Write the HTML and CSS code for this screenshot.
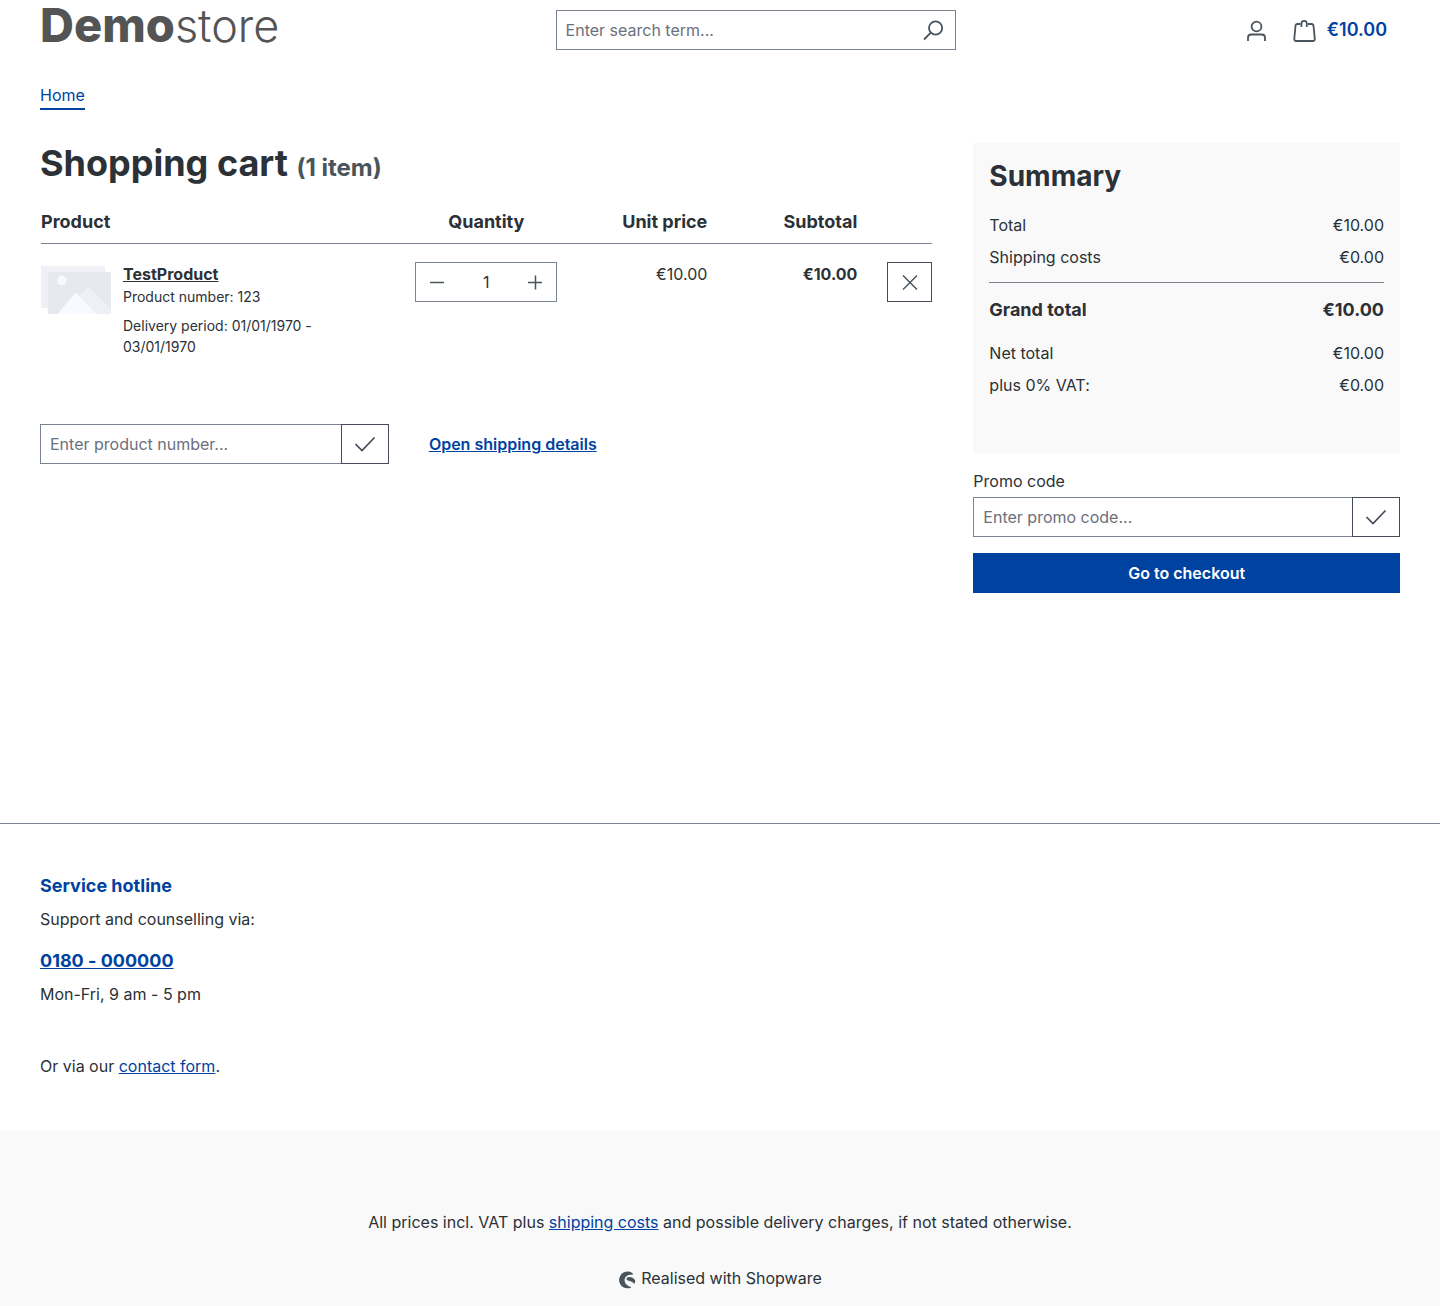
FILE: index.html
```html
<!DOCTYPE html>
<html lang="en">
<head>
<meta charset="utf-8">
<meta name="viewport" content="width=device-width, initial-scale=1">
<title>Shopping cart</title>
<link rel="stylesheet" href="styles.css">
</head>
<body>
<header class="header container">
  <a class="logo" href="#"><strong>Demo</strong><span>store</span></a>
  <form class="search" role="search">
    <input type="search" placeholder="Enter search term..." aria-label="Enter search term">
    <button type="button" aria-label="Search">
      <svg class="icon" viewBox="0 0 22 22"><circle cx="13.600" cy="9" r="6.600"/><path d="M8.800 13.700 2 20.500"/></svg>
    </button>
  </form>
  <div class="actions">
    <button class="action" type="button" aria-label="Your account">
      <svg class="icon" viewBox="0 0 22 22"><circle cx="11.500" cy="7.500" r="4.900"/><path d="M3 22v-3.200q0-3.300 3.300-3.300h10.400q3.300 0 3.300 3.300V22"/></svg>
    </button>
    <a class="action cart-link" href="#" aria-label="Shopping cart, €10.00">
      <svg class="icon" viewBox="0 0 22 22"><path d="M7.200 5H4.500Q2.700 5 2.500 6.800L1.300 19.500Q1.200 22 3.200 22h16.600q2.100 0 2-2.500L20.500 6.800Q20.300 5 18.500 5H15M8.400 8V4.500q0-2.700 2.700-2.700t2.700 2.700V8"/></svg>
      <span>€10.00</span>
    </a>
  </div>
</header>

<nav class="main-nav container" aria-label="Main"><a href="#">Home</a></nav>

<main class="checkout container">
  <section class="cart">
    <h1>Shopping cart <small>(1 item)</small></h1>
    <table class="items">
      <thead>
        <tr><th class="col-product">Product</th><th class="col-quantity">Quantity</th><th class="col-price">Unit price</th><th class="col-price">Subtotal</th><th class="col-remove"></th></tr>
      </thead>
      <tbody>
        <tr>
          <td>
            <div class="product">
              <svg class="thumb" viewBox="0 0 70 48" aria-hidden="true">
                <path fill="#f0f1f6" d="M0 0h64v42H0z"/><path fill="#fff" d="M5.500 42h1.500v6h-1.500z"/><path fill="#e8e9ee" d="M6.800 6H70v42H6.800z"/>
                <circle cx="20.800" cy="14.500" r="4.700" fill="#f9faff"/>
                <path fill="#eff0f6" d="M34 34l13.500-13.500L70 43.500V48H50z"/><path fill="#f9faff" d="M16.500 48 34.700 26.300 55 48z"/>
              </svg>
              <div class="details">
                <a class="name" href="#">TestProduct</a>
                <p>Product number: 123</p>
                <p class="delivery">Delivery period: 01/01/1970 - 03/01/1970</p>
              </div>
            </div>
          </td>
          <td>
            <div class="quantity">
              <button type="button" aria-label="Decrease quantity"><svg viewBox="0 0 14 14"><path d="M0 7.500h14"/></svg></button>
              <input type="text" inputmode="numeric" value="1" aria-label="Quantity">
              <button type="button" aria-label="Increase quantity"><svg viewBox="0 0 14 14"><path d="M0 7.500h14M7.500.500v14"/></svg></button>
            </div>
          </td>
          <td class="price">€10.00</td>
          <td class="price"><strong>€10.00</strong></td>
          <td class="price"><button class="remove" type="button" aria-label="Remove product"><svg viewBox="0 0 14 14"><path d="m0 .500 14 14m0-14-14 14"/></svg></button></td>
        </tr>
      </tbody>
    </table>
    <div class="cart-tools">
      <form class="input-group">
        <input type="text" placeholder="Enter product number..." aria-label="Product number">
        <button type="button" aria-label="Add product"><svg viewBox="0 0 20 16"><path d="m.5 8 6.500 6.500L19.500 1.500"/></svg></button>
      </form>
      <a class="shipping" href="#">Open shipping details</a>
    </div>
  </section>

  <aside>
    <section class="summary">
      <h2>Summary</h2>
      <dl>
        <div><dt>Total</dt><dd>€10.00</dd></div>
        <div><dt>Shipping costs</dt><dd>€0.00</dd></div>
        <div class="grand"><dt>Grand total</dt><dd>€10.00</dd></div>
        <div><dt>Net total</dt><dd>€10.00</dd></div>
        <div><dt>plus 0% VAT:</dt><dd>€0.00</dd></div>
      </dl>
    </section>
    <label class="promo-label" for="promo">Promo code</label>
    <form class="input-group">
      <input id="promo" type="text" placeholder="Enter promo code...">
      <button type="button" aria-label="Apply promo code"><svg viewBox="0 0 20 16"><path d="m.5 8 6.500 6.500L19.500 1.500"/></svg></button>
    </form>
    <button class="go" type="button">Go to checkout</button>
  </aside>
</main>

<footer class="footer">
  <section class="hotline container">
    <h3>Service hotline</h3>
    <p>Support and counselling via:</p>
    <a class="phone" href="#">0180 - 000000</a>
    <p>Mon-Fri, 9 am - 5 pm</p>
    <p class="contact">Or via our <a href="#">contact form</a>.</p>
  </section>
  <div class="footer-bottom">
    <p>All prices incl. VAT plus <a href="#">shipping costs</a> and possible delivery charges, if not stated otherwise.</p>
    <p class="realised">
      <svg viewBox="0 0 18 18" aria-hidden="true"><path d="M14.500 2.200A8.400 8.400 0 1 0 12.800 16.700q.7-.5 0-.8C9.500 15 6.600 12.600 6.600 9.200c0-3.800 3.200-5.800 7.700-5.500q1.400-.4.200-1.500z"/><path d="M17.200 9.600c-.5-2.300-3.400-3.700-5.800-3.700-1.900 0-2.900.8-2.900 2 0 2.400 6.400 1.700 7.200 4.600.1.500.5.500.7 0q.9-1.300.8-2.900z"/></svg>
      Realised with Shopware
    </p>
  </div>
</footer>
</body>
</html>
```
FILE: styles.css
```css
* { box-sizing: border-box; }

body {
  margin: 0;
  background: #fff;
  color: #2b3136;
  font: 400 16px/24px Inter, "Liberation Sans", sans-serif;
  text-rendering: optimizeSpeed;
}

h1, h2, h3, p, dl, dd { margin: 0; }
a { color: #0042a0; }
input, button { margin: 0; font: inherit; color: inherit; border-radius: 0; text-rendering: inherit; }
button { display: flex; align-items: center; justify-content: center; padding: 0; border: 0; background: none; cursor: pointer; }
input { min-width: 0; border: 0; background: #fff; outline: 0; }
input::placeholder { color: #6c6f7c; opacity: 1; }
svg { flex: none; fill: none; stroke: #4a545b; overflow: visible; }

.container { padding-right: 40px; padding-left: 40px; }

.header { display: flex; align-items: center; height: 60px; }
.logo { color: #545454; line-height: 52px; text-decoration: none; white-space: nowrap; }
.logo strong { font-size: 47px; font-weight: 800; }
.logo span { font-size: 45px; font-weight: 300; }
.search { display: flex; flex: 0 1 400px; height: 40px; margin: 0 auto; border: 1px solid #798490; }
.search input { flex: 1; padding: 0 9px; }
.search button { width: 44px; }
.icon { width: 22px; height: 22px; stroke-width: 1.800; }
.actions { display: flex; }
.action { display: flex; align-items: center; gap: 12px; height: 40px; padding: 0 13px; }
.cart-link { color: #0042a0; font-size: 18px; font-weight: 600; text-decoration: none; }

.main-nav { display: flex; padding-top: 23px; padding-bottom: 33px; }
.main-nav a { padding-bottom: 1px; border-bottom: 2px solid #0042a0; text-decoration: none; }

.checkout { display: grid; grid-template-columns: repeat(12, minmax(0, 1fr)); gap: 40px; min-height: 680px; }
.cart { grid-column: span 8; }
aside { grid-column: span 4; }

h1 { margin-bottom: 16px; font-size: 36px; line-height: 40px; font-weight: 700; }
h1 small { color: #4a545b; font-size: 24px; line-height: 24px; }

.items { width: calc(100% - 2px); margin: 0 1px; table-layout: fixed; border-collapse: collapse; }
.items th { padding: 9px 0 8px; border-bottom: 1px solid #798490; font-size: 18px; line-height: 27px; text-align: left; }
.items td { padding: 18px 0 0; vertical-align: top; }
.items .col-quantity { width: 142px; text-align: center; }
.items .col-price { width: 150px; text-align: right; }
.items .col-remove { width: 75px; }
.price { text-align: right; }

.product { display: flex; gap: 12px; padding-right: 40px; }
.thumb { width: 70px; height: 48px; margin-top: 4px; stroke: none; }
.details { font-size: 14px; line-height: 21px; }
.name { display: block; color: inherit; font-size: 16px; line-height: 24px; font-weight: 700; }
.delivery { margin-top: 8px; }

.quantity { display: flex; height: 40px; border: 1px solid #798490; }
.quantity button { width: 42px; }
.quantity input { flex: 1; padding: 0; text-align: center; }
.quantity svg, .remove svg { width: 14px; height: 14px; stroke-width: 1.500; }
.remove { width: 45px; height: 40px; margin-left: auto; border: 1px solid #474a57; }

.cart-tools { display: grid; grid-template-columns: repeat(12, minmax(0, 1fr)); column-gap: 40px; align-items: center; margin-top: 67px; }
.cart-tools .input-group { grid-column: span 5; }
.shipping { grid-column: span 7; font-weight: 600; }

.input-group { display: flex; height: 40px; }
.input-group input { flex: 1; padding: 0 9px; border: 1px solid #798490; border-right: 0; }
.input-group button { width: 48px; border: 1px solid #474a57; }
.input-group svg { width: 20px; height: 16px; stroke: #474a57; stroke-width: 1.700; }

.summary { padding: 16px 16px 52px; margin-bottom: 16px; background: #f9f9f9; }
.summary h2 { margin-bottom: 16px; font-size: 28px; line-height: 34px; font-weight: 700; }
.summary dl div { display: flex; justify-content: space-between; padding: 4px 0; }
.summary dl .grand { margin: 9px 0 14px; padding: 13px 0 0; border-top: 1px solid #798490; font-size: 18px; line-height: 27px; font-weight: 700; }
.promo-label { display: block; margin-bottom: 4px; }
.go { width: 100%; height: 40px; margin-top: 16px; background: #0042a0; color: #fff; font-weight: 600; }

.footer { border-top: 1px solid #798490; }
.hotline { padding-top: 48px; padding-bottom: 52px; }
.hotline h3 { margin-bottom: 8px; color: #0042a0; font-size: 18px; line-height: 27px; font-weight: 700; }
.phone { display: inline-block; margin: 16px 0 8px; font-size: 18px; line-height: 27px; font-weight: 700; }
.contact { margin-top: 48px; }
.footer-bottom { padding: 80px 40px 16px; background: #f9f9f9; text-align: center; }
.realised { display: flex; align-items: center; justify-content: center; gap: 5px; margin-top: 32px; }
.realised svg { width: 18px; height: 18px; margin-top: 4px; fill: #4a545b; stroke: none; }
```
